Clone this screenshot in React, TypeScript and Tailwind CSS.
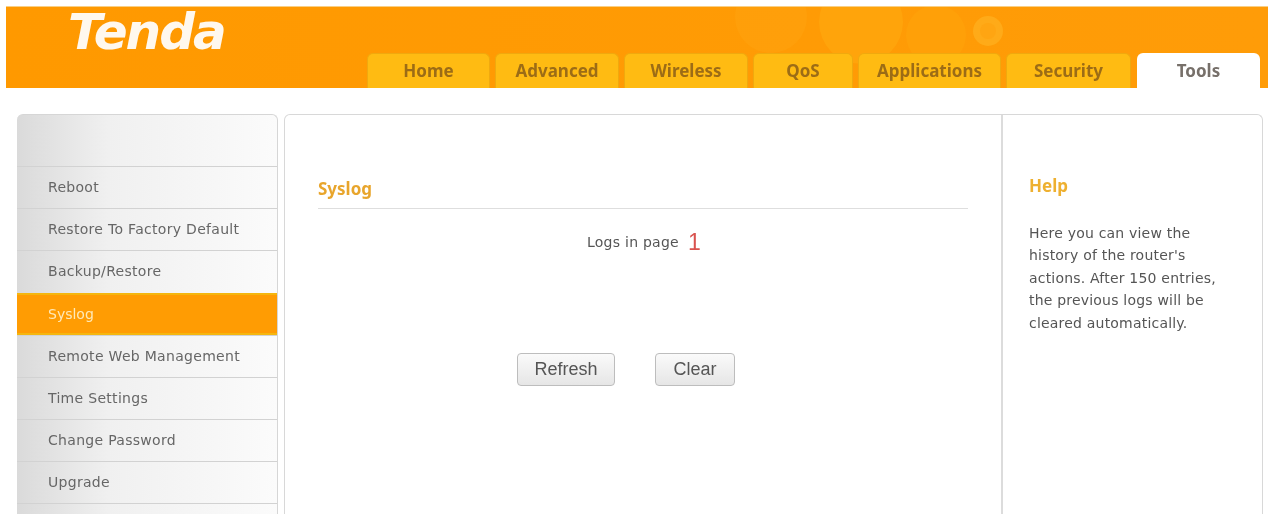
const tabs = [
  { label: "Home", width: "w-[123px]" },
  { label: "Advanced", width: "w-[124px]" },
  { label: "Wireless", width: "w-[124px]" },
  { label: "QoS", width: "w-[100px]" },
  { label: "Applications", width: "w-[143px]" },
  { label: "Security", width: "w-[125px]" },
];

const menu = [
  "Reboot",
  "Restore To Factory Default",
  "Backup/Restore",
  "Syslog",
  "Remote Web Management",
  "Time Settings",
  "Change Password",
  "Upgrade",
];

export default function App() {
  return (
    <div className="h-[514px] overflow-hidden bg-white font-['DejaVu_Sans',sans-serif] text-[#555] blur-[0.4px]">
      {/* Header */}
      <div className="pt-[6px] pl-[6px]">
        <div className="relative flex h-[82px] border-t border-[#f9cf85] bg-gradient-to-r from-[#ff9900] to-[#ff9c08]">
          <svg className="absolute left-[720px] top-0 h-[60px] w-[320px]" viewBox="0 0 320 60" fill="none">
            <circle cx="45" cy="10" r="36" fill="#ffb020" fillOpacity="0.18" />
            <circle cx="135" cy="15" r="42" fill="#ffb416" fillOpacity="0.35" />
            <circle cx="210" cy="28" r="30" fill="#ffa90f" fillOpacity="0.35" />
            <circle cx="262" cy="24" r="15" fill="#ffb92a" fillOpacity="0.5" />
            <circle cx="262" cy="24" r="8" fill="#ffa512" />
          </svg>
          <div className="relative ml-[62px] h-[50px] w-[299px] text-[50px] leading-[50px] font-bold italic tracking-[-2px] text-[#fff8ee]">
            Tenda
          </div>
          <div className="relative mt-auto flex gap-[5px]">
            {tabs.map((tab) => (
              <div
                key={tab.label}
                className={`${tab.width} flex h-[35px] items-center justify-center rounded-t-[6px] border-x border-t border-[#f0a90e] bg-[#ffbb12] font-['Noto_Sans',sans-serif] text-[17px] font-bold text-[#9c6c16]`}
              >
                {tab.label}
              </div>
            ))}
            <div className="ml-px flex h-[35px] w-[123px] items-center justify-center rounded-t-[6px] bg-white font-['Noto_Sans',sans-serif] text-[17px] font-bold text-[#77706a]">
              Tools
            </div>
          </div>
        </div>
      </div>

      {/* Body */}
      <div className="mt-[26px] flex gap-[6px] pl-[17px]">
        {/* Sidebar */}
        <div className="h-[420px] w-[261px] rounded-t-[6px] border-t border-r border-[#d6d6d6] bg-gradient-to-r from-[#dadada] via-[#f0f0f0] via-35% to-[#fbfbfb] pt-[51px]">
          {menu.map((item) =>
            item === "Syslog" ? (
              <div
                key={item}
                className="mt-[1px] flex h-[42px] items-center border-t-2 border-b-2 border-[#f5b60e] bg-[#ff9c03] pl-[31px] text-[14px] text-[#ffe9b8]"
              >
                {item}
              </div>
            ) : (
              <div
                key={item}
                className="flex h-[42px] items-center border-t border-[#d2d2d2] pl-[31px] text-[14px] tracking-[0.3px] text-[#666]"
              >
                {item}
              </div>
            ),
          )}
          <div className="h-[10px] border-t border-[#d2d2d2]" />
        </div>

        {/* Main panel */}
        <div className="flex h-[420px] w-[979px] rounded-t-[6px] border-x border-t border-[#d8d8d8]">
          <div className="w-[718px] border-r-2 border-[#dcdcdc] pt-[61px] pl-[33px]">
            <div className="h-[33px] w-[650px] border-b border-[#dedede] font-['Noto_Sans',sans-serif] text-[17px] leading-[26px] font-bold text-[#e8a52c]">
              Syslog
            </div>
            <div className="mt-[21px] ml-[269px] flex h-[24px] items-center text-[14px] tracking-[0.25px] text-[#555]">
              Logs in page
              <span className="ml-[9px] font-['Liberation_Sans',sans-serif] text-[23px] font-light text-[#d9534f]">1</span>
            </div>
            <div className="mt-[99px] ml-[199px] flex gap-[40px] font-['Liberation_Sans',sans-serif] text-[18px] text-[#555]">
              <button className="h-[33px] w-[98px] rounded-[4px] border border-[#bdbdbd] bg-gradient-to-b from-[#fafafa] to-[#e6e6e6]">
                Refresh
              </button>
              <button className="h-[33px] w-[80px] rounded-[4px] border border-[#bdbdbd] bg-gradient-to-b from-[#fafafa] to-[#e6e6e6]">
                Clear
              </button>
            </div>
          </div>
          <div className="flex-1 pt-[59px] pl-[26px]">
            <div className="font-['Noto_Sans',sans-serif] text-[17px] leading-[24px] font-bold text-[#eeb030]">
              Help
            </div>
            <p className="mt-[24px] w-[200px] text-[14px] leading-[22.4px] tracking-[0.2px] text-[#555]">
              Here you can view the history of the router's actions. After 150 entries, the previous logs will be cleared automatically.
            </p>
          </div>
        </div>
      </div>
    </div>
  );
}
